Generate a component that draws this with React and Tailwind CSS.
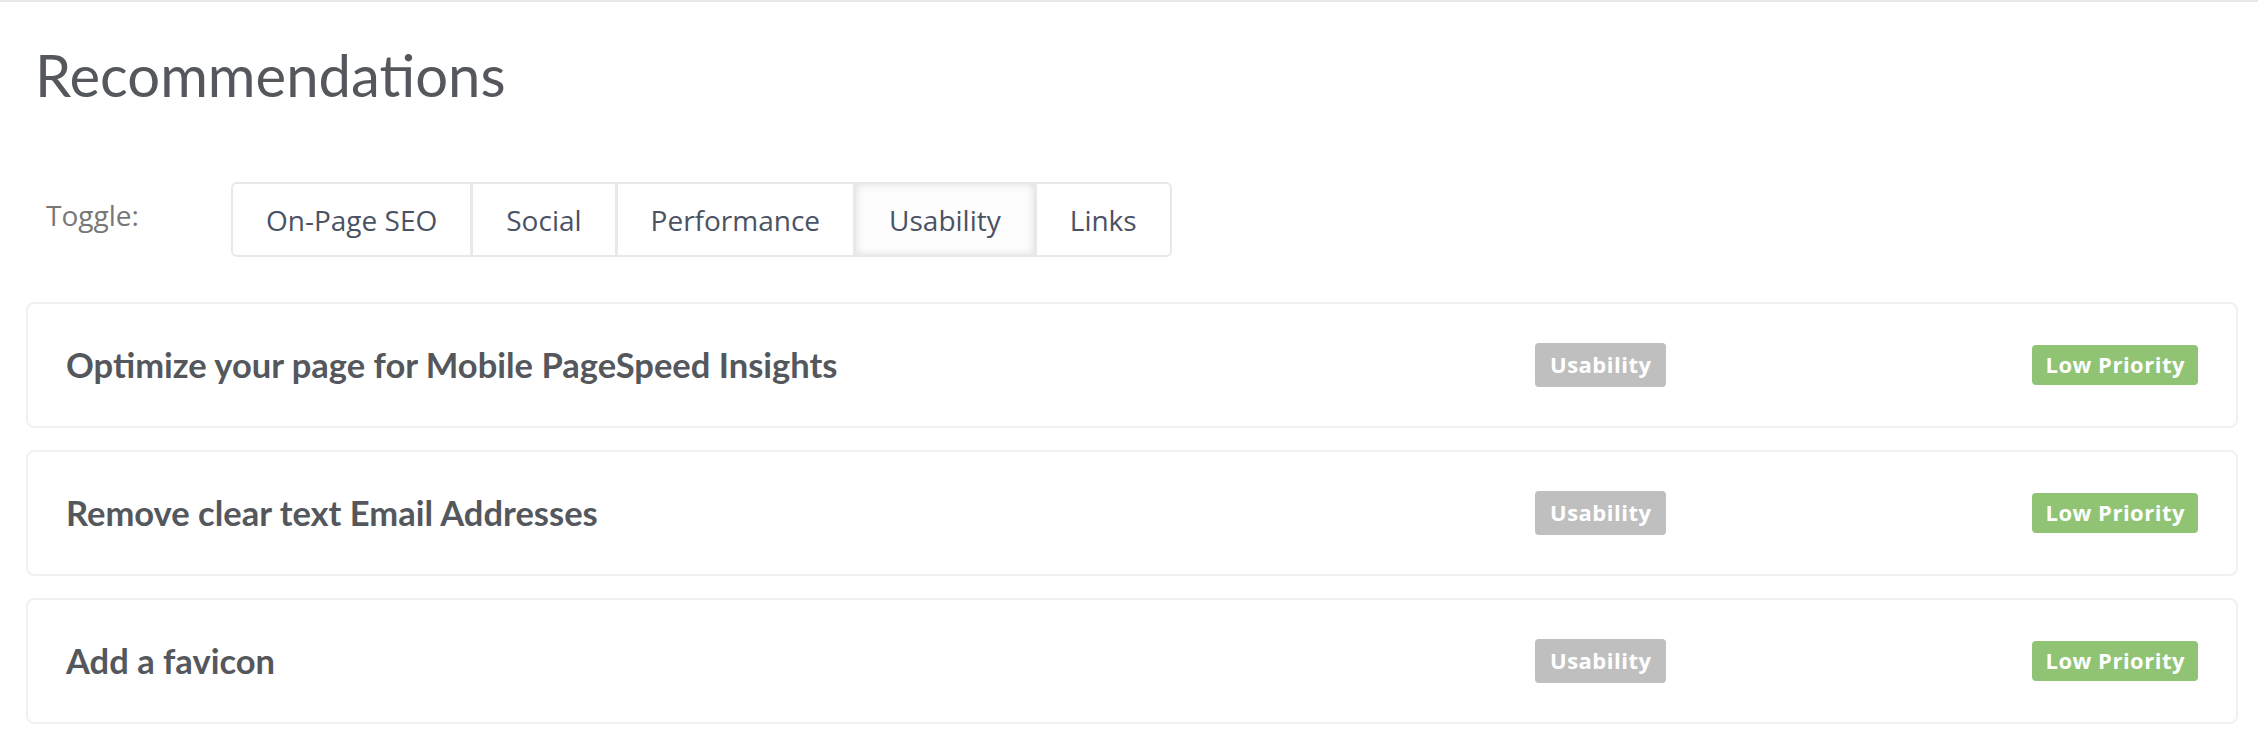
import React from "react";

const tabs = ["On-Page SEO", "Social", "Performance", "Usability", "Links"];
const items = [
  "Optimize your page for Mobile PageSpeed Insights",
  "Remove clear text Email Addresses",
  "Add a favicon",
];

export default function App() {
  return (
    <div className="min-h-[742px] w-full bg-white border-t-2 border-[#e6e8ec]">
      <h1
        className="ml-[35px] mt-[38px] text-[58px] leading-[1.2] font-normal text-[#54575c]"
        style={{ fontFamily: "Lato, sans-serif" }}
      >
        Recommendations
      </h1>

      <div className="mt-[72px] flex items-start" style={{ fontFamily: "'Open Sans', sans-serif" }}>
        <div className="ml-[46px] mt-[14px] w-[185px] text-[28px] leading-[38px] text-[#777777]">
          Toggle:
        </div>
        <div className="flex rounded-[6px] border-2 border-[#e8e8e8] bg-white">
          {tabs.map((t, i) => (
            <div
              key={t}
              className={
                "px-[33px] pt-[17px] pb-[16px] text-[28px] leading-[38px] text-[#4b5263] " +
                (i > 0 ? "border-l-[3px] border-[#e8e8e8] " : "") +
                (t === "Usability" ? "bg-[#fdfdfd] shadow-[inset_0_0_10px_rgba(0,0,0,0.13)]" : "")
              }
            >
              {t}
            </div>
          ))}
        </div>
      </div>

      <div className="mt-[45px] ml-[26px] mr-[20px] flex flex-col gap-[22px]">
        {items.map((title) => (
          <div
            key={title}
            className="flex h-[126px] items-center rounded-[8px] border-2 border-[#f0f0f0] bg-white"
          >
            <div
              className="flex-1 pl-[38px] text-[34.5px] font-bold text-[#54575c]"
              style={{ fontFamily: "Lato, sans-serif" }}
            >
              {title}
            </div>
            <div
              className="flex w-[701px] items-center justify-between pr-[38px]"
              style={{ fontFamily: "'Open Sans', sans-serif" }}
            >
              <span className="flex h-[44px] items-center rounded-[4px] bg-[#bfbfbf] px-[15px] text-[22px] font-bold tracking-[0.5px] text-white">
                Usability
              </span>
              <span className="flex h-[40px] items-center rounded-[4px] bg-[#90c474] px-[13px] text-[22px] font-bold tracking-[0.5px] text-white">
                Low Priority
              </span>
            </div>
          </div>
        ))}
      </div>
    </div>
  );
}
